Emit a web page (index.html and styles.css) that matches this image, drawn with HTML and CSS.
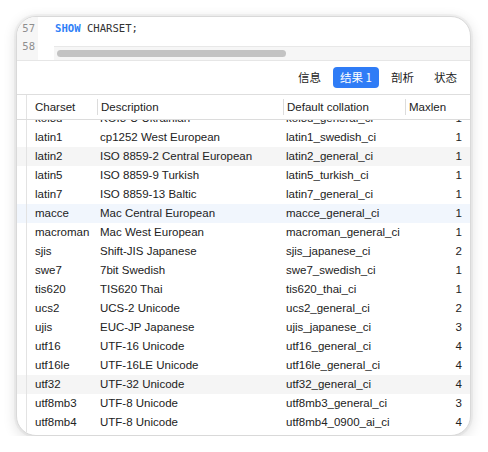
FILE: index.html
```html
<!DOCTYPE html>
<html>
<head>
<meta charset="utf-8">
<link rel="stylesheet" href="styles.css">
</head>
<body>
<div class="window">
  <div class="editor">
    <div class="gutter"><div class="ln">57</div><div class="ln">58</div></div>
    <div class="code">
      <div class="line"><span class="kw">SHOW</span> CHARSET;</div>
      <div class="hscroll"><div class="thumb"></div></div>
    </div>
  </div>
  <div class="tabs">
    <div class="tab">信息</div>
    <div class="tab active">结果 1</div>
    <div class="tab">剖析</div>
    <div class="tab">状态</div>
  </div>
  <div class="table">
    <div class="row head">
      <div class="g"></div>
      <div class="c1"><span class="h">Charset</span></div>
      <div class="c2"><span class="h sep">Description</span></div>
      <div class="c3"><span class="h sep">Default collation</span></div>
      <div class="c4"><span class="h sep">Maxlen</span></div>
    </div>
    <div class="body">
      <div class="rows">
        <div class="row"><div class="g"></div><div class="c1">koi8u</div><div class="c2">KOI8-U Ukrainian</div><div class="c3">koi8u_general_ci</div><div class="c4 num">1</div></div>
        <div class="row"><div class="g"></div><div class="c1">latin1</div><div class="c2">cp1252 West European</div><div class="c3">latin1_swedish_ci</div><div class="c4 num">1</div></div>
        <div class="row gray"><div class="g"></div><div class="c1">latin2</div><div class="c2">ISO 8859-2 Central European</div><div class="c3">latin2_general_ci</div><div class="c4 num">1</div></div>
        <div class="row"><div class="g"></div><div class="c1">latin5</div><div class="c2">ISO 8859-9 Turkish</div><div class="c3">latin5_turkish_ci</div><div class="c4 num">1</div></div>
        <div class="row"><div class="g"></div><div class="c1">latin7</div><div class="c2">ISO 8859-13 Baltic</div><div class="c3">latin7_general_ci</div><div class="c4 num">1</div></div>
        <div class="row blue"><div class="g"></div><div class="c1">macce</div><div class="c2">Mac Central European</div><div class="c3">macce_general_ci</div><div class="c4 num">1</div></div>
        <div class="row"><div class="g"></div><div class="c1">macroman</div><div class="c2">Mac West European</div><div class="c3">macroman_general_ci</div><div class="c4 num">1</div></div>
        <div class="row"><div class="g"></div><div class="c1">sjis</div><div class="c2">Shift-JIS Japanese</div><div class="c3">sjis_japanese_ci</div><div class="c4 num">2</div></div>
        <div class="row"><div class="g"></div><div class="c1">swe7</div><div class="c2">7bit Swedish</div><div class="c3">swe7_swedish_ci</div><div class="c4 num">1</div></div>
        <div class="row"><div class="g"></div><div class="c1">tis620</div><div class="c2">TIS620 Thai</div><div class="c3">tis620_thai_ci</div><div class="c4 num">1</div></div>
        <div class="row"><div class="g"></div><div class="c1">ucs2</div><div class="c2">UCS-2 Unicode</div><div class="c3">ucs2_general_ci</div><div class="c4 num">2</div></div>
        <div class="row"><div class="g"></div><div class="c1">ujis</div><div class="c2">EUC-JP Japanese</div><div class="c3">ujis_japanese_ci</div><div class="c4 num">3</div></div>
        <div class="row"><div class="g"></div><div class="c1">utf16</div><div class="c2">UTF-16 Unicode</div><div class="c3">utf16_general_ci</div><div class="c4 num">4</div></div>
        <div class="row"><div class="g"></div><div class="c1">utf16le</div><div class="c2">UTF-16LE Unicode</div><div class="c3">utf16le_general_ci</div><div class="c4 num">4</div></div>
        <div class="row gray"><div class="g"></div><div class="c1">utf32</div><div class="c2">UTF-32 Unicode</div><div class="c3">utf32_general_ci</div><div class="c4 num">4</div></div>
        <div class="row"><div class="g"></div><div class="c1">utf8mb3</div><div class="c2">UTF-8 Unicode</div><div class="c3">utf8mb3_general_ci</div><div class="c4 num">3</div></div>
        <div class="row"><div class="g"></div><div class="c1">utf8mb4</div><div class="c2">UTF-8 Unicode</div><div class="c3">utf8mb4_0900_ai_ci</div><div class="c4 num">4</div></div>
      </div>
    </div>
  </div>
</div>
</body>
</html>
```
FILE: styles.css
```css
html, body {
  margin: 0;
  padding: 0;
  background: #ffffff;
}
body {
  padding: 16px 0 0 16px;
  font-family: "Liberation Sans", Arial, "Noto Sans CJK SC", sans-serif;
  color: #222222;
}
.window {
  width: 455px;
  height: 420px;
  box-sizing: border-box;
  border: 1px solid #d9d9d9;
  border-radius: 20px;
  overflow: hidden;
  background: #fff;
  box-shadow: 0 0 0 2px rgba(0,0,0,0.03), 0 3px 14px rgba(0,0,0,0.14);
  display: flex;
  flex-direction: column;
}
.editor {
  height: 43px;
  flex: none;
  display: flex;
  border-bottom: 1px solid #e6e6e6;
}
.gutter {
  width: 21px;
  background: #f6f6f6;
  padding-top: 2px;
  box-sizing: border-box;
}
.ln {
  height: 18px;
  line-height: 18px;
  text-align: right;
  padding-right: 3px;
  font-family: "DejaVu Sans Mono", "Liberation Mono", monospace;
  font-size: 10.5px;
  color: #8e8e8e;
}
.code {
  flex: 1;
  margin-left: 16px;
  padding-top: 2px;
  display: flex;
  flex-direction: column;
  justify-content: space-between;
}
.line {
  height: 18px;
  line-height: 18px;
  padding-left: 1px;
  font-family: "DejaVu Sans Mono", "Liberation Mono", monospace;
  font-size: 10.6px;
  color: #333333;
  white-space: pre;
}
.kw {
  color: #2f7ff7;
  font-weight: bold;
}
.hscroll {
  height: 14px;
  border-top: 1px solid #e8e8e8;
  background: #f6f6f6;
  padding-top: 3px;
  box-sizing: border-box;
  padding-left: 3px;
}
.thumb {
  width: 229px;
  height: 7px;
  border-radius: 4px;
  background: #c3c3c3;
}
.tabs {
  height: 33px;
  flex: none;
  display: flex;
  justify-content: flex-end;
  align-items: center;
  gap: 4px;
  padding-right: 5px;
  border-bottom: 1px solid #dedede;
}
.tab {
  height: 21px;
  line-height: 21px;
  padding: 0 8px;
  border-radius: 4px;
  font-family: "Noto Sans CJK SC", "Liberation Sans", sans-serif;
  font-size: 11.5px;
  color: #222222;
}
.tab.active {
  width: 46px;
  padding: 0;
  text-align: center;
  box-sizing: border-box;
  background: #2f7cf6;
  color: #fff;
}
.table {
  flex: 1;
  display: flex;
  flex-direction: column;
  min-height: 0;
}
.row {
  display: grid;
  grid-template-columns: 10px 70px 186px 122px 1fr;
  height: 19px;
  line-height: 19px;
  font-size: 11.5px;
  white-space: nowrap;
}
.row > div {
  overflow: hidden;
}
.row .g {
  border-right: 1px solid #e3e3e3;
}
.row .c1 { padding-left: 8px; }
.row .c2, .row .c3 { padding-left: 3px; }
.row .c4 { padding-left: 3px; }
.row .num {
  text-align: right;
  padding-right: 8px;
}
.row.head {
  height: 24px;
  border-bottom: 1px solid #dcdcdc;
  flex: none;
}
.row.head > div {
  display: flex;
  align-items: center;
  padding-left: 0;
}
.row.head .c1 { padding-left: 8px; }
.h {
  height: 16px;
  line-height: 16px;
}
.h.sep {
  border-left: 1px solid #dcdcdc;
  padding-left: 3px;
}
.body {
  flex: 1;
  overflow: hidden;
}
.rows {
  margin-top: -11px;
}
.row.gray { background: #f5f5f5; }
.row.blue { background: #f1f6fd; }
```
